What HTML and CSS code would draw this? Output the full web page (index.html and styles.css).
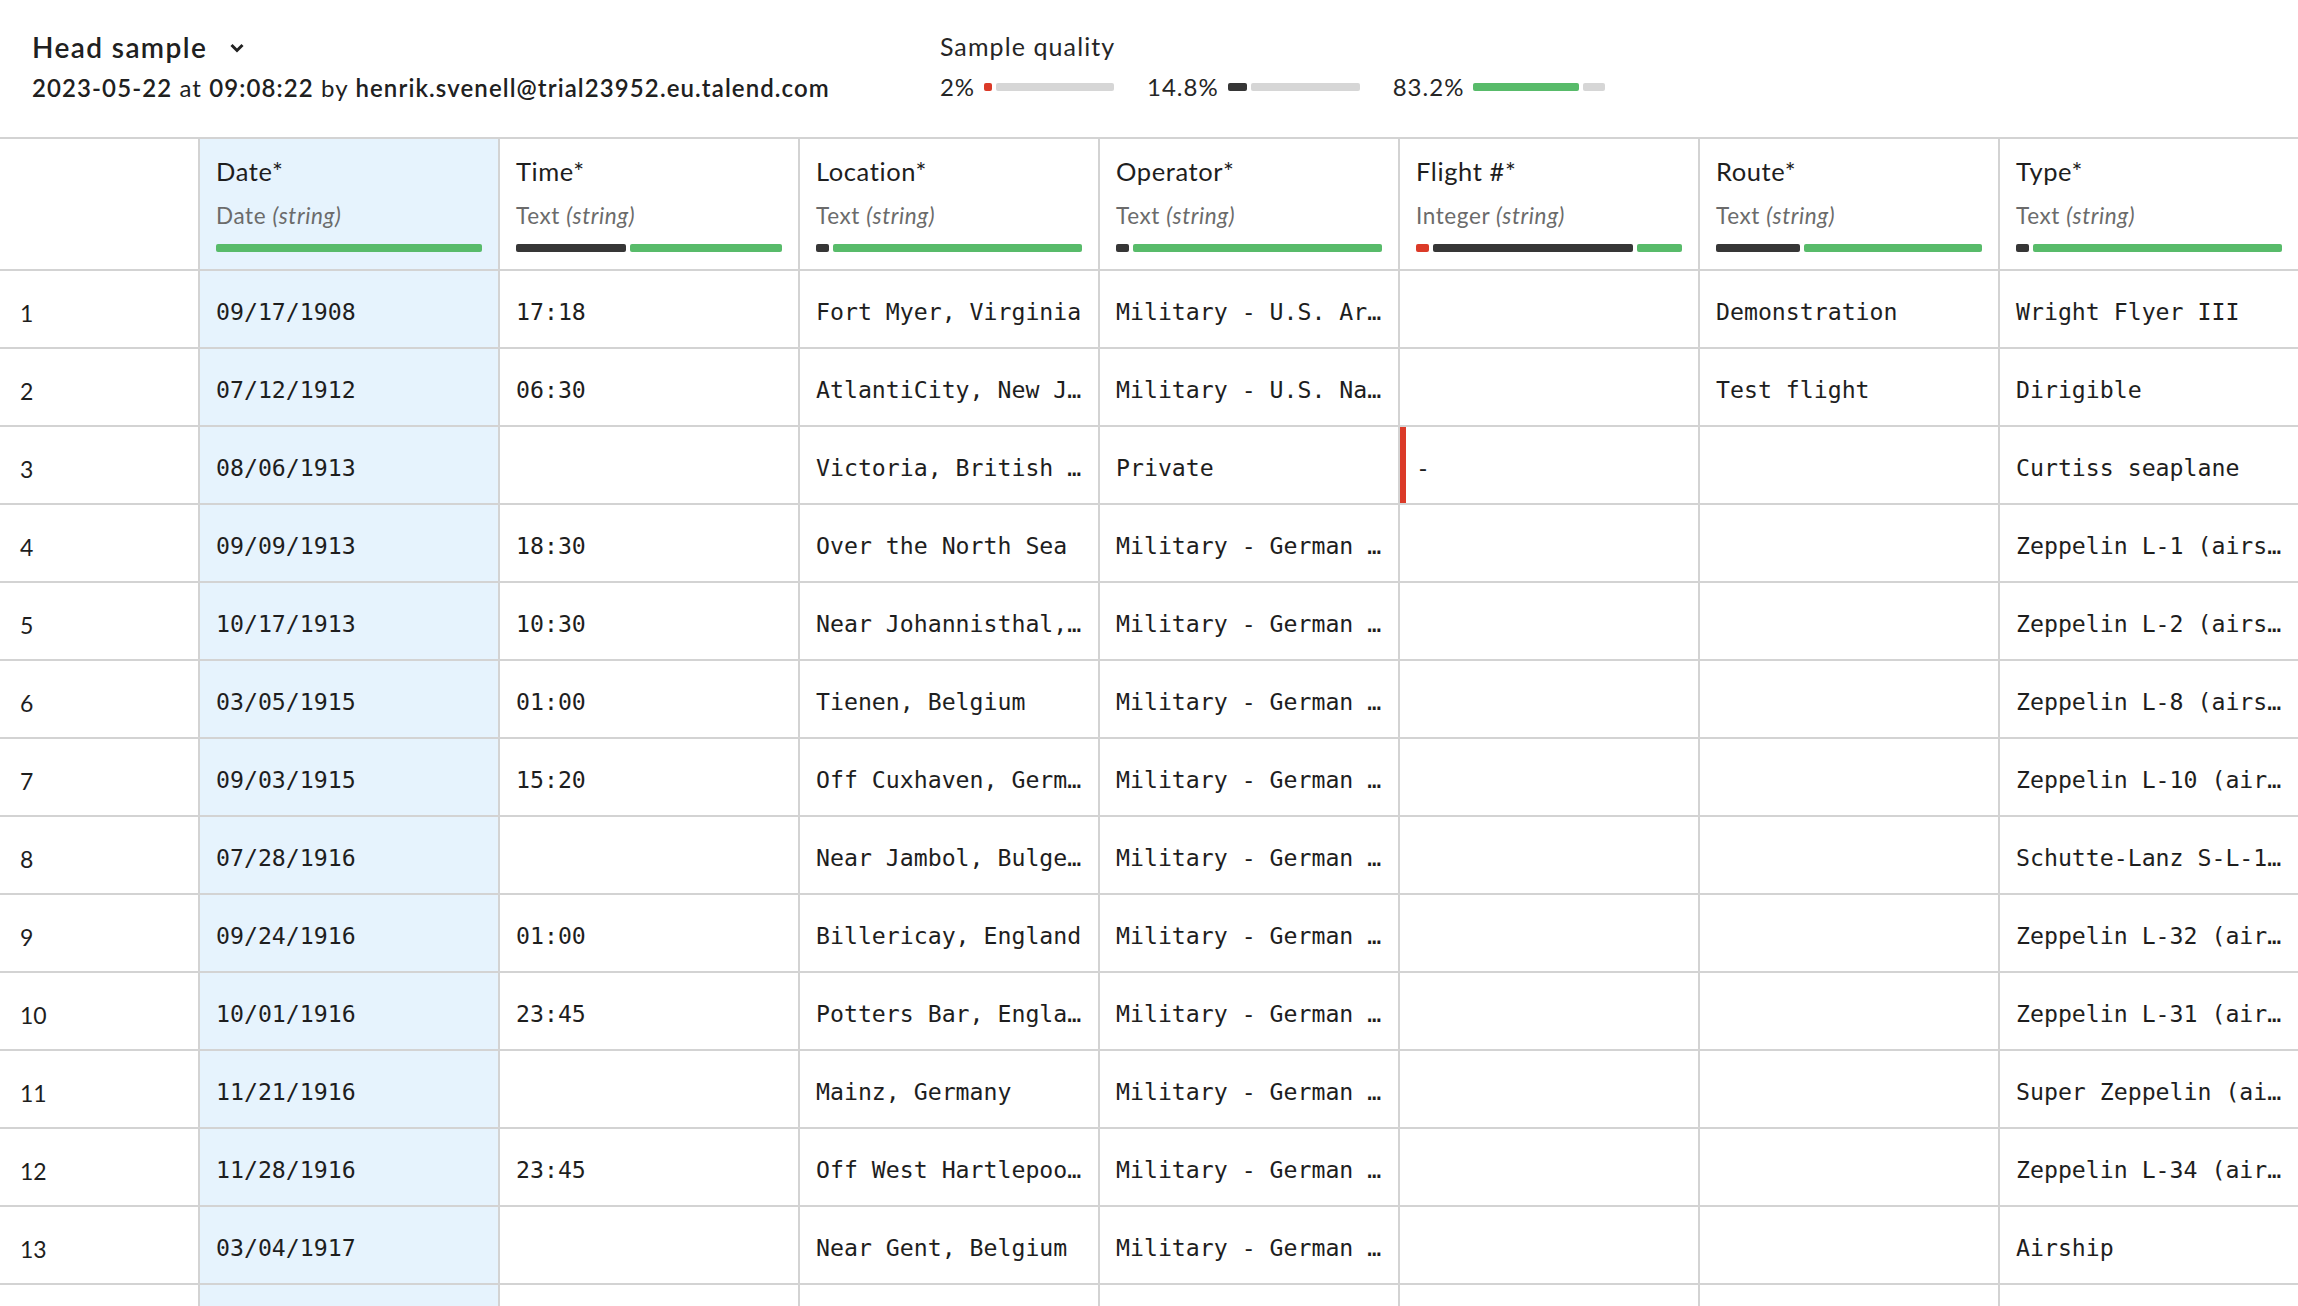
FILE: index.html
```html
<!DOCTYPE html>
<html lang="en">
<head>
<meta charset="utf-8">
<title>Head sample</title>
<link rel="stylesheet" href="styles.css">
</head>
<body>
<header class="topbar">
  <div class="sample">
    <div class="sample-title">Head sample
      <svg class="chev" width="16" height="10" viewBox="0 0 16 10"><path d="M2.5 2 L8 7.5 L13.5 2" fill="none" stroke="#222" stroke-width="3"/></svg>
    </div>
    <div class="sample-meta"><b>2023-05-22</b> at <b>09:08:22</b> by <b>henrik.svenell@trial23952.eu.talend.com</b></div>
  </div>
  <div class="quality">
    <div class="quality-title">Sample quality</div>
    <div class="quality-stats">
      <div class="stat"><span class="pct">2%</span><div class="qbar"><i class="seg red" style="width:8px"></i><i class="seg empty" style="width:118px"></i></div></div>
      <div class="stat"><span class="pct">14.8%</span><div class="qbar"><i class="seg dark" style="width:19px"></i><i class="seg empty" style="width:109px"></i></div></div>
      <div class="stat"><span class="pct">83.2%</span><div class="qbar"><i class="seg green" style="width:106px"></i><i class="seg empty" style="width:22px"></i></div></div>
    </div>
  </div>
</header>

<div class="grid">
  <div class="hcell idx"></div>
  <div class="hcell sel"><div class="hname">Date*</div><div class="htype">Date <em>(string)</em></div><div class="hbar"><i class="seg green" style="width:266px"></i></div></div>
  <div class="hcell"><div class="hname">Time*</div><div class="htype">Text <em>(string)</em></div><div class="hbar"><i class="seg dark" style="width:110px"></i><i class="seg green" style="width:152px"></i></div></div>
  <div class="hcell"><div class="hname">Location*</div><div class="htype">Text <em>(string)</em></div><div class="hbar"><i class="seg dark" style="width:13px"></i><i class="seg green" style="width:249px"></i></div></div>
  <div class="hcell"><div class="hname">Operator*</div><div class="htype">Text <em>(string)</em></div><div class="hbar"><i class="seg dark" style="width:13px"></i><i class="seg green" style="width:249px"></i></div></div>
  <div class="hcell"><div class="hname">Flight #*</div><div class="htype">Integer <em>(string)</em></div><div class="hbar"><i class="seg red" style="width:13px"></i><i class="seg dark" style="width:200px"></i><i class="seg green" style="width:45px"></i></div></div>
  <div class="hcell"><div class="hname">Route*</div><div class="htype">Text <em>(string)</em></div><div class="hbar"><i class="seg dark" style="width:84px"></i><i class="seg green" style="width:178px"></i></div></div>
  <div class="hcell"><div class="hname">Type*</div><div class="htype">Text <em>(string)</em></div><div class="hbar"><i class="seg dark" style="width:13px"></i><i class="seg green" style="width:249px"></i></div></div>

  <div class="cell idx">1</div><div class="cell sel">09/17/1908</div><div class="cell">17:18</div><div class="cell">Fort Myer, Virginia</div><div class="cell">Military - U.S. Army</div><div class="cell"></div><div class="cell">Demonstration</div><div class="cell">Wright Flyer III</div>
  <div class="cell idx">2</div><div class="cell sel">07/12/1912</div><div class="cell">06:30</div><div class="cell">AtlantiCity, New Jersey</div><div class="cell">Military - U.S. Navy</div><div class="cell"></div><div class="cell">Test flight</div><div class="cell">Dirigible</div>
  <div class="cell idx">3</div><div class="cell sel">08/06/1913</div><div class="cell"></div><div class="cell">Victoria, British Columbia, Canada</div><div class="cell">Private</div><div class="cell invalid">-</div><div class="cell"></div><div class="cell">Curtiss seaplane</div>
  <div class="cell idx">4</div><div class="cell sel">09/09/1913</div><div class="cell">18:30</div><div class="cell">Over the North Sea</div><div class="cell">Military - German Navy</div><div class="cell"></div><div class="cell"></div><div class="cell">Zeppelin L-1 (airship)</div>
  <div class="cell idx">5</div><div class="cell sel">10/17/1913</div><div class="cell">10:30</div><div class="cell">Near Johannisthal, Germany</div><div class="cell">Military - German Navy</div><div class="cell"></div><div class="cell"></div><div class="cell">Zeppelin L-2 (airship)</div>
  <div class="cell idx">6</div><div class="cell sel">03/05/1915</div><div class="cell">01:00</div><div class="cell">Tienen, Belgium</div><div class="cell">Military - German Navy</div><div class="cell"></div><div class="cell"></div><div class="cell">Zeppelin L-8 (airship)</div>
  <div class="cell idx">7</div><div class="cell sel">09/03/1915</div><div class="cell">15:20</div><div class="cell">Off Cuxhaven, Germany</div><div class="cell">Military - German Navy</div><div class="cell"></div><div class="cell"></div><div class="cell">Zeppelin L-10 (airship)</div>
  <div class="cell idx">8</div><div class="cell sel">07/28/1916</div><div class="cell"></div><div class="cell">Near Jambol, Bulgeria</div><div class="cell">Military - German Army</div><div class="cell"></div><div class="cell"></div><div class="cell">Schutte-Lanz S-L-10 (airship)</div>
  <div class="cell idx">9</div><div class="cell sel">09/24/1916</div><div class="cell">01:00</div><div class="cell">Billericay, England</div><div class="cell">Military - German Navy</div><div class="cell"></div><div class="cell"></div><div class="cell">Zeppelin L-32 (airship)</div>
  <div class="cell idx">10</div><div class="cell sel">10/01/1916</div><div class="cell">23:45</div><div class="cell">Potters Bar, England</div><div class="cell">Military - German Navy</div><div class="cell"></div><div class="cell"></div><div class="cell">Zeppelin L-31 (airship)</div>
  <div class="cell idx">11</div><div class="cell sel">11/21/1916</div><div class="cell"></div><div class="cell">Mainz, Germany</div><div class="cell">Military - German Army</div><div class="cell"></div><div class="cell"></div><div class="cell">Super Zeppelin (airship)</div>
  <div class="cell idx">12</div><div class="cell sel">11/28/1916</div><div class="cell">23:45</div><div class="cell">Off West Hartlepool, England</div><div class="cell">Military - German Navy</div><div class="cell"></div><div class="cell"></div><div class="cell">Zeppelin L-34 (airship)</div>
  <div class="cell idx">13</div><div class="cell sel">03/04/1917</div><div class="cell"></div><div class="cell">Near Gent, Belgium</div><div class="cell">Military - German Army</div><div class="cell"></div><div class="cell"></div><div class="cell">Airship</div>
  <div class="cell idx">14</div><div class="cell sel">03/30/1917</div><div class="cell"></div><div class="cell">Off Northern Germany</div><div class="cell">Military - German Navy</div><div class="cell"></div><div class="cell"></div><div class="cell">Zeppelin L-9 (airship)</div>
</div>
</body>
</html>
```

FILE: styles.css
```css
html, body {
  margin: 0;
  padding: 0;
  height: 100%;
  overflow: hidden;
  background: #ffffff;
}

body {
  font-family: "Lato", "Open Sans", sans-serif;
  color: #202020;
}

.topbar {
  height: 137px;
  border-bottom: 2px solid #d3d3d3;
  box-sizing: content-box;
  display: flex;
  align-items: flex-start;
  gap: 110px;
  padding-left: 32px;
}

.sample {
  padding-top: 31px;
}

.sample-title {
  font-size: 28px;
  font-weight: 600;
  line-height: 32px;
  letter-spacing: 1.4px;
  display: flex;
  align-items: center;
  gap: 22px;
}

.chev {
  display: block;
  margin-top: 2px;
}

.sample-meta {
  margin-top: 10px;
  font-size: 24px;
  line-height: 30px;
  font-weight: 400;
  letter-spacing: 1.1px;
  white-space: nowrap;
}

.sample-meta b {
  font-weight: 600;
}

.quality {
  padding-top: 30px;
}

.quality-title {
  font-size: 25px;
  line-height: 32px;
  font-weight: 400;
  letter-spacing: 1.1px;
  color: #262626;
}

.quality-stats {
  margin-top: 10px;
  display: flex;
  align-items: center;
  gap: 33px;
  font-size: 24px;
  line-height: 30px;
  letter-spacing: 1px;
  color: #262626;
}

.stat {
  display: flex;
  align-items: center;
  gap: 9px;
}

.qbar, .hbar {
  display: flex;
  gap: 4px;
}

.seg {
  display: block;
  height: 8px;
  border-radius: 2px;
  flex: none;
}

.seg.red { background: #db3a28; }
.seg.dark { background: #363636; }
.seg.green { background: #58bb6a; }
.seg.empty { background: #d6d6d6; }

.grid {
  display: grid;
  grid-template-columns: 198px repeat(7, 298px);
  grid-template-rows: 130px;
  grid-auto-rows: 76px;
  gap: 2px;
  background: #d3d3d3;
  width: 2298px;
}

.hcell {
  background: #ffffff;
  padding: 17px 16px 0;
  display: flex;
  flex-direction: column;
  min-width: 0;
}

.hcell.sel, .cell.sel {
  background: #e6f3fd;
}

.hname {
  font-size: 25.5px;
  line-height: 31px;
  letter-spacing: 0.6px;
  color: #1e1e1e;
}

.htype {
  margin-top: 15px;
  font-size: 22.5px;
  line-height: 28px;
  letter-spacing: 0.6px;
  color: #6b6b6b;
}

.htype em {
  font-style: italic;
}

.hbar {
  margin-top: 14px;
}

.cell {
  background: #ffffff;
  padding: 9px 16px 0;
  line-height: 63px;
  font-family: "DejaVu Sans Mono", "Liberation Mono", monospace;
  font-size: 23.2px;
  color: #1e1e1e;
  white-space: nowrap;
  overflow: hidden;
  text-overflow: ellipsis;
  min-width: 0;
}

.cell.idx {
  font-family: "Lato", "Open Sans", sans-serif;
  font-size: 23px;
  padding-left: 20px;
  padding-top: 11px;
}

.cell.invalid {
  box-shadow: inset 6px 0 0 #db3a28;
}
```
